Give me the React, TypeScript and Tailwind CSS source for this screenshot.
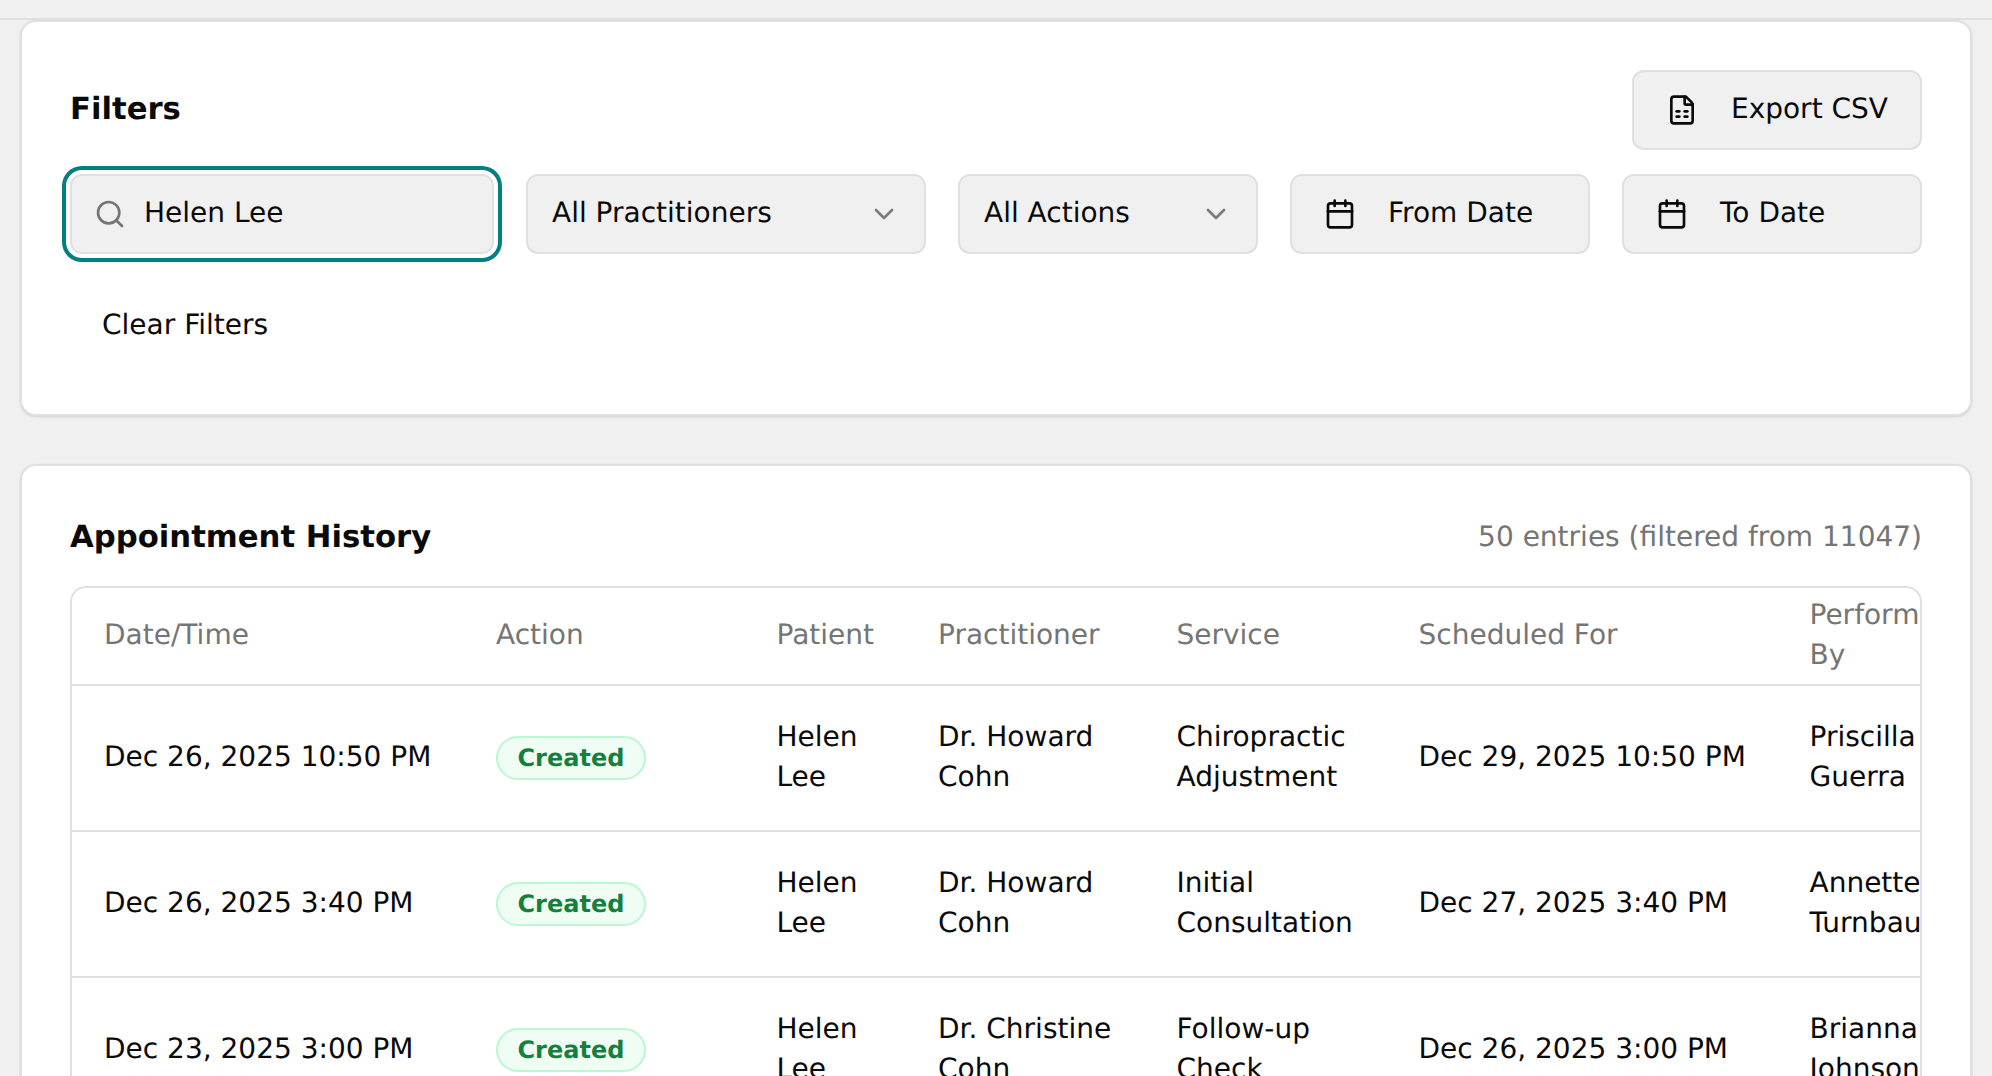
import { Search, ChevronDown, Calendar, FileSpreadsheet } from 'lucide-react';

const rows = [
  { at: 'Dec 26, 2025 10:50 PM', doc: 'Dr. Howard Cohn', service: 'Chiropractic Adjustment', when: 'Dec 29, 2025 10:50 PM', by: 'Priscilla Guerra' },
  { at: 'Dec 26, 2025 3:40 PM', doc: 'Dr. Howard Cohn', service: 'Initial Consultation', when: 'Dec 27, 2025 3:40 PM', by: 'Annette Turnbaugh' },
  { at: 'Dec 23, 2025 3:00 PM', doc: 'Dr. Christine Cohn', service: 'Follow-up Check', when: 'Dec 26, 2025 3:00 PM', by: 'Brianna Johnson' },
];

const heads = ['Date/Time', 'Action', 'Patient', 'Practitioner', 'Service', 'Scheduled For', 'Performed By'];

function SelectBox({ label, width }: { label: string; width: string }) {
  return (
    <div className={`${width} h-[80px] flex items-center justify-between rounded-[12px] border-2 border-[#e0e0e0] bg-[#f0f0f0] px-[24px]`}>
      <span className="pb-[2px]">{label}</span>
      <ChevronDown className="w-[32px] h-[32px] text-[#0a0a0a] opacity-50" />
    </div>
  );
}

function DateBox({ label }: { label: string }) {
  return (
    <div className="w-[300px] h-[80px] flex items-center gap-[32px] rounded-[12px] border-2 border-[#e0e0e0] bg-[#f0f0f0] px-[32px]">
      <Calendar className="w-[32px] h-[32px] shrink-0" />
      <span className="pb-[2px]">{label}</span>
    </div>
  );
}

export default function App() {
  return (
    <div className="h-[1076px] overflow-hidden bg-[#f0f0f0] text-[28px] leading-[40px] text-[#0a0a0a] font-['DejaVu_Sans',sans-serif] [text-rendering:geometricPrecision]">
      <div className="h-[20px] border-b-2 border-[#e0e0e0]" />
      <div className="px-[20px] flex flex-col gap-[48px]">
        {/* Filters card */}
        <div className="rounded-[16px] border-2 border-[#e0e0e0] bg-white p-[48px] shadow-sm">
          <div className="flex items-center justify-between mb-[24px]">
            <h3 className="text-[30.7px] font-bold">Filters</h3>
            <div className="h-[80px] flex items-center gap-[33px] rounded-[12px] border-2 border-[#e0e0e0] bg-[#f0f0f0] px-[32px]">
              <FileSpreadsheet className="w-[32px] h-[32px]" />
              <span className="pb-[2px]">Export CSV</span>
            </div>
          </div>
          <div className="flex flex-wrap gap-[32px]">
            <div className="flex-1 h-[80px] flex items-center gap-[18px] rounded-[12px] border-2 border-[#e0e0e0] bg-[#f0f0f0] pl-[22px] shadow-[0_0_0_4px_#ffffff,0_0_0_8px_#008080]">
              <Search className="w-[32px] h-[32px] text-[#757575]" />
              <span className="pb-[2px]">Helen Lee</span>
            </div>
            <SelectBox label="All Practitioners" width="w-[400px]" />
            <SelectBox label="All Actions" width="w-[300px]" />
            <DateBox label="From Date" />
            <DateBox label="To Date" />
            <div className="w-full h-[80px] flex items-center px-[32px] pb-[2px]">Clear Filters</div>
          </div>
        </div>

        {/* History card */}
        <div className="rounded-[16px] border-2 border-[#e0e0e0] bg-white px-[48px] pt-[48px] shadow-sm">
          <div className="flex items-center justify-between mb-[24px] h-[48px]">
            <h3 className="text-[30.7px] font-bold">Appointment History</h3>
            <span className="text-[#757575] pb-[2px]">50 entries (filtered from 11047)</span>
          </div>
          <div className="rounded-[16px] border-2 border-[#e0e0e0] overflow-hidden">
            <table className="table-fixed w-[1920px] border-collapse">
              <colgroup>
                <col className="w-[392px]" />
                <col className="w-[280.5px]" />
                <col className="w-[161.5px]" />
                <col className="w-[238.5px]" />
                <col className="w-[242px]" />
                <col className="w-[391px]" />
                <col className="w-[214.5px]" />
              </colgroup>
              <thead>
                <tr className="border-b-2 border-[#e0e0e0]">
                  {heads.map((h) => (
                    <th key={h} className="px-[32px] pt-[7px] pb-[9px] text-left font-normal text-[#757575]">{h}</th>
                  ))}
                </tr>
              </thead>
              <tbody>
                {rows.map((r) => (
                  <tr key={r.at} className="border-b-2 border-[#e0e0e0]">
                    <td className="px-[32px] pt-[31px] pb-[33px] whitespace-nowrap">{r.at}</td>
                    <td className="px-[32px] py-[32px]">
                      <span className="inline-block rounded-full border-2 border-[#bbf7d0] bg-[#f0fdf4] px-[19.5px] py-[4px] text-[24px] leading-[32px] font-bold text-[#15803d]">Created</span>
                    </td>
                    <td className="px-[32px] pt-[31px] pb-[33px]">Helen Lee</td>
                    <td className="px-[32px] pt-[31px] pb-[33px]">{r.doc}</td>
                    <td className="px-[32px] pt-[31px] pb-[33px]">{r.service}</td>
                    <td className="px-[32px] pt-[31px] pb-[33px] whitespace-nowrap">{r.when}</td>
                    <td className="px-[32px] pt-[31px] pb-[33px]">{r.by}</td>
                  </tr>
                ))}
              </tbody>
            </table>
          </div>
        </div>
      </div>
    </div>
  );
}
